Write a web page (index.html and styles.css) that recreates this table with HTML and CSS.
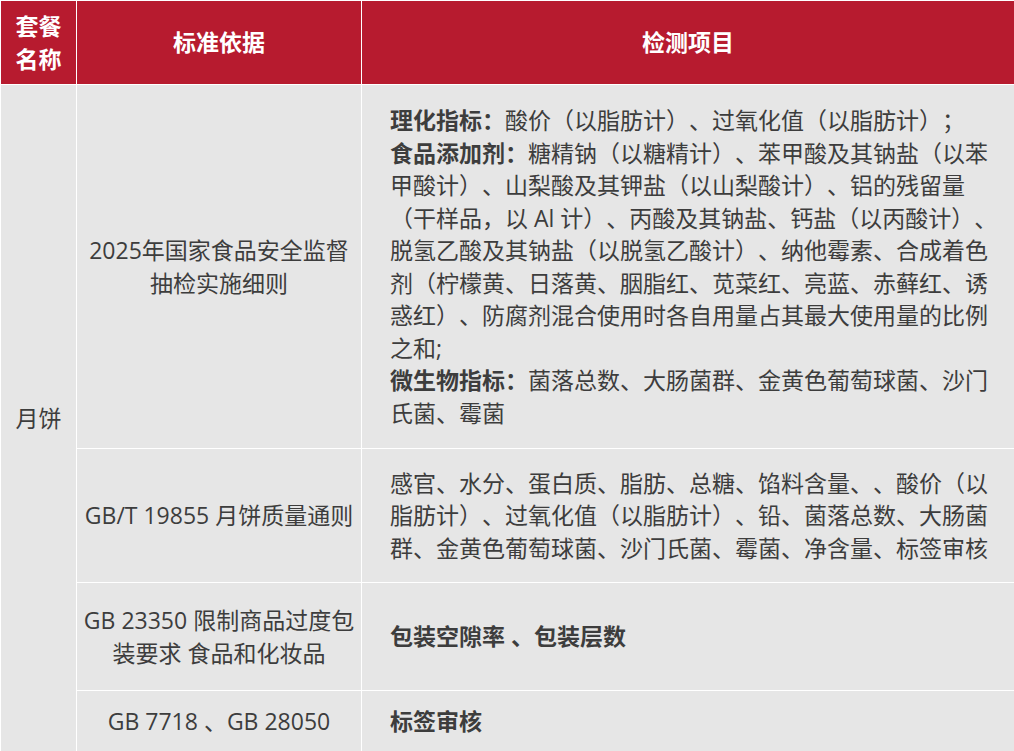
FILE: index.html
```html
<!DOCTYPE html>
<html lang="zh-CN">
<head>
<meta charset="utf-8">
<title>月饼检测套餐</title>
<link rel="stylesheet" href="styles.css">
</head>
<body>
<table class="spec">
  <colgroup>
    <col class="c-name">
    <col class="c-std">
    <col class="c-item">
  </colgroup>
  <thead>
    <tr class="head">
      <th>套餐<br>名称</th>
      <th>标准依据</th>
      <th>检测项目</th>
    </tr>
  </thead>
  <tbody>
    <tr class="r1">
      <td class="name" rowspan="4">月饼</td>
      <td class="std">2025年国家食品安全监督<br>抽检实施细则</td>
      <td class="item"><b>理化指标：</b>酸价（以脂肪计）、过氧化值（以脂肪计）；<br><b>食品添加剂：</b>糖精钠（以糖精计）、苯甲酸及其钠盐（以苯<br>甲酸计）、山梨酸及其钾盐（以山梨酸计）、铝的残留量<br>（干样品，以 Al 计）、丙酸及其钠盐、钙盐（以丙酸计）、<br>脱氢乙酸及其钠盐（以脱氢乙酸计）、纳他霉素、合成着色<br>剂（柠檬黄、日落黄、胭脂红、苋菜红、亮蓝、赤藓红、诱<br>惑红）、防腐剂混合使用时各自用量占其最大使用量的比例<br>之和;<br><b>微生物指标：</b>菌落总数、大肠菌群、金黄色葡萄球菌、沙门<br>氏菌、霉菌</td>
    </tr>
    <tr class="r2">
      <td class="std">GB/T 19855 月饼质量通则</td>
      <td class="item">感官、水分、蛋白质、脂肪、总糖、馅料含量、、酸价（以<br>脂肪计）、过氧化值（以脂肪计）、铅、菌落总数、大肠菌<br>群、金黄色葡萄球菌、沙门氏菌、霉菌、净含量、标签审核</td>
    </tr>
    <tr class="r3">
      <td class="std">GB 23350 限制商品过度包<br>装要求 食品和化妆品</td>
      <td class="item"><b>包装空隙率 、包装层数</b></td>
    </tr>
    <tr class="r4">
      <td class="std">GB 7718 、GB 28050</td>
      <td class="item"><b>标签审核</b></td>
    </tr>
  </tbody>
</table>
</body>
</html>
```

FILE: styles.css
```css
html {
  overflow: hidden;
}

body {
  margin: 0;
  background: #ffffff;
  font-family: "Open Sans", "Noto Sans CJK SC", sans-serif;
  color: #3d3d3d;
}

.spec {
  width: 1015px;
  table-layout: fixed;
  border-collapse: separate;
  border-spacing: 1px;
  background: #ffffff;
  font-size: 23px;
  line-height: 32.5px;
  text-spacing-trim: space-all;
}

.c-name { width: 75px; }
.c-std { width: 284px; }
.c-item { width: 652px; }

.spec th,
.spec td {
  padding: 0;
  vertical-align: middle;
}

.head th {
  background: #b71b2f;
  color: #ffffff;
  font-weight: 700;
  text-align: center;
  height: 83px;
}

.spec td {
  background: #e6e6e6;
}

.name {
  text-align: center;
}

.std {
  text-align: center;
  white-space: nowrap;
}

.item {
  text-align: left;
  padding: 0 8px 0 28px !important;
  white-space: nowrap;
}

.item b {
  font-weight: 700;
}

.r1 { height: 363px; }
.r2 { height: 133px; }
.r3 { height: 107px; }
.r4 { height: 60px; }
```
